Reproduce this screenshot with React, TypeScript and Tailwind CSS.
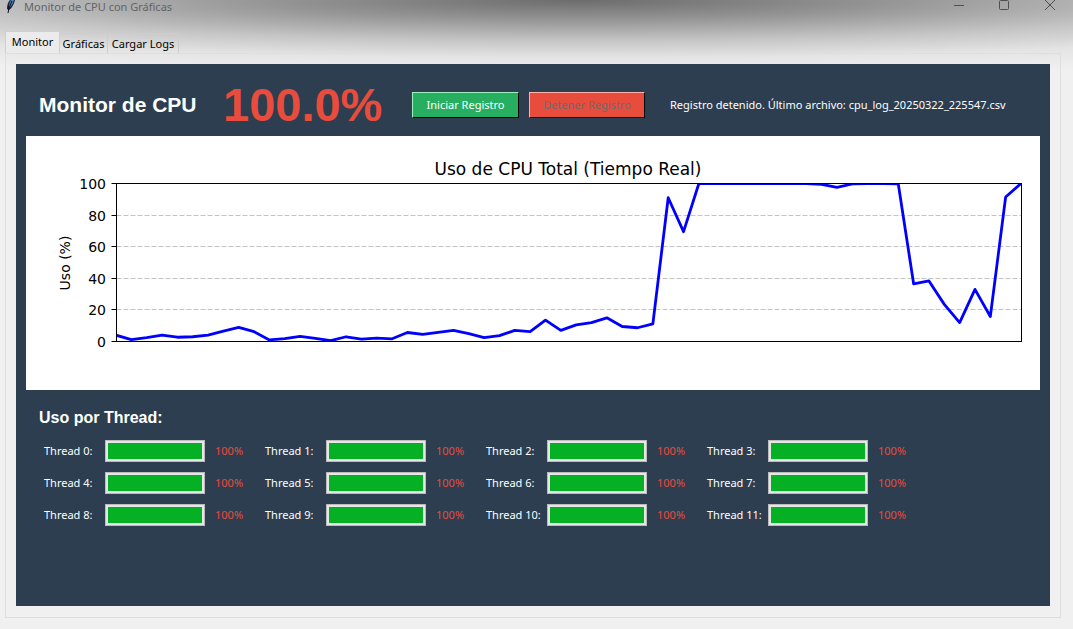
const usage = [
  4, 1.2, 2.4, 4, 2.7, 3, 4, 6.5, 9, 6.2, 1, 1.8, 3.3, 2, 0.5, 3, 1.5, 2.2, 1.7, 5.7,
  4.5, 5.8, 7, 5, 2.5, 3.7, 7, 6.2, 13.5, 7, 10.5, 12, 15, 9.5, 8.7, 11.2, 91, 69.5, 100, 100,
  100, 100, 100, 100, 100, 100, 99.5, 97.5, 99.7, 100, 100, 99.7, 36.5, 38.3, 23.5, 12, 33, 15.8, 91.5, 100,
];

const plot = { left: 90.5, right: 995.5, top: 47.5, bottom: 205.5 };
const xAt = (i: number) => plot.left - 0.5 + (i * (plot.right - plot.left)) / (usage.length - 1);
const yAt = (v: number) => plot.bottom - (v * (plot.bottom - plot.top)) / 100;
const tickY = (v: number) => Math.floor(yAt(v)) + 0.5;
const ticks = [0, 20, 40, 60, 80, 100];

function Chart() {
  return (
    <svg viewBox="0 0 1014 254" className="block h-auto w-full bg-white font-['DejaVu_Sans',sans-serif]" role="img" aria-label="Uso de CPU Total (Tiempo Real)">
      <defs>
        <clipPath id="plot-area">
          <rect x={plot.left} y={plot.top} width={plot.right - plot.left} height={plot.bottom - plot.top} />
        </clipPath>
      </defs>
      <text x="542" y="39" textAnchor="middle" className="text-[17px]">Uso de CPU Total (Tiempo Real)</text>
      <text x="44" y="127" textAnchor="middle" transform="rotate(-90 44 127)" className="text-[14px]">Uso (%)</text>
      {ticks.map((t) => (
        <g key={t}>
          {t > 0 && t < 100 && (
            <line x1={plot.left} x2={plot.right} y1={tickY(t)} y2={tickY(t)} stroke="#c4c4c4" strokeDasharray="5 2" />
          )}
          <line x1={plot.left - 5} x2={plot.left} y1={tickY(t)} y2={tickY(t)} stroke="black" />
          <text x="80" y={Math.round(tickY(t) + 5)} textAnchor="end" className="text-[14px]">{t}</text>
        </g>
      ))}
      <polyline
        clipPath="url(#plot-area)"
        points={usage.map((v, i) => `${xAt(i)},${yAt(v)}`).join(" ")}
        fill="none"
        stroke="#0000ff"
        strokeWidth="2.8"
        strokeLinejoin="round"
      />
      <rect x={plot.left} y={plot.top} width={plot.right - plot.left} height={plot.bottom - plot.top} fill="none" stroke="black" />
    </svg>
  );
}

function Feather() {
  return (
    <svg width="12" height="14" viewBox="0 0 12 14" aria-hidden="true">
      <path d="M11 0H6C4 2 3 5 3 9L5 10C8 8 10 4 11 0Z" fill="#14202e" />
      <path d="M10 0H7C5 3 5 5 5 8C8 6 9 3 10 0Z" fill="#4f82bd" />
      <path d="M8 1L5 8L4 13" fill="none" stroke="#0b0f14" />
    </svg>
  );
}

function TitleBar() {
  return (
    <header className="flex h-8 items-start pl-1 text-[#646464]">
      <Feather />
      <h1 className="grow pl-2 text-[11px] leading-[14px]">Monitor de CPU con Gráficas</h1>
      <div className="flex text-[#505050]">
        <button aria-label="Minimizar" className="flex w-[45px] justify-center">
          <svg width="12" height="12" stroke="currentColor" aria-hidden="true"><path d="M0 5.5h10" /></svg>
        </button>
        <button aria-label="Maximizar" className="flex w-[45px] justify-center">
          <svg width="12" height="12" fill="none" stroke="currentColor" aria-hidden="true"><rect x="0.5" y="0.5" width="9" height="9" rx="1" /></svg>
        </button>
        <button aria-label="Cerrar" className="flex w-[46px] justify-center">
          <svg width="12" height="12" stroke="currentColor" aria-hidden="true"><path d="M1 0L11 10M11 0L1 10" /></svg>
        </button>
      </div>
    </header>
  );
}

function Thread({ index }: { index: number }) {
  return (
    <div className="flex h-[22px] w-[221px] items-center">
      <span className="w-[61px] whitespace-nowrap">Thread {index}:</span>
      <div role="progressbar" aria-label={`Thread ${index}`} aria-valuenow={100} className="h-[22px] w-[100px] border border-[#bcbcbc] bg-[#e6e6e6] p-[2px]">
        <div className="h-full bg-[#06b025]" style={{ width: "100%" }} />
      </div>
      <span className="pl-[10px] text-[#e74c3c]">100%</span>
    </div>
  );
}

export default function App() {
  return (
    <div className="flex min-h-screen flex-col bg-[#f0f0f0] font-['Noto_Sans',sans-serif] text-[11px] text-black">
      <div className="flex grow flex-col bg-[radial-gradient(ellipse_110%_76px_at_54%_0px,#6c6c6c_0%,#939393_25%,#c6c6c6_54%,#e4e4e4_76%,#f0f0f0_100%)]">
        <TitleBar />
        <div className="flex grow flex-col pr-3 pb-[11px] pl-[5px]">
          <div role="tablist" className="flex h-[21px] items-end">
            <button role="tab" aria-selected="true" className="h-[22px] w-[55px] border border-b-0 border-[#cfcfcf] bg-[#ebebeb]">Monitor</button>
            <button role="tab" className="h-5 w-12 border-t border-r border-[#cdcdcd] pt-[2px]">Gráficas</button>
            <button role="tab" className="h-5 w-[71px] border-t border-r border-[#cdcdcd] pt-[2px]">Cargar Logs</button>
          </div>
          <div className="flex grow flex-col border border-[#dedede] p-[10px] pb-[11px]">
            <main className="grow bg-[#2c3e50] px-[10px] text-white">
              <div className="flex h-[72px] items-center pt-[10px] pl-[13px]">
                <h2 className="w-[184px] font-['Liberation_Sans',Arial,sans-serif] text-[21px] font-bold">Monitor de CPU</h2>
                <strong className="w-[189px] font-['Liberation_Sans',Arial,sans-serif] text-[47px] leading-[48px] font-bold text-[#e74c3c]">100.0%</strong>
                <button className="h-[26px] w-[107px] border border-t-[#9cf0bd] border-r-black border-b-black border-l-[#9cf0bd] bg-[#27ae60]">Iniciar Registro</button>
                <button disabled className="ml-[10px] h-[26px] w-[116px] border border-t-[#ffb3aa] border-r-black border-b-black border-l-[#ffb3aa] bg-[#e74c3c] text-[#6d6d6d]">Detener Registro</button>
                <p className="pl-[25px] whitespace-nowrap">Registro detenido. Último archivo: cpu_log_20250322_225547.csv</p>
              </div>
              <Chart />
              <section className="pt-4 pl-[13px]">
                <h3 className="font-['Liberation_Sans',Arial,sans-serif] text-[16px] leading-[24px] font-bold">Uso por Thread:</h3>
                <div className="flex max-w-[900px] flex-wrap gap-y-[10px] pt-[10px] pl-[5px]">
                  {Array.from({ length: 12 }, (_, i) => <Thread key={i} index={i} />)}
                </div>
              </section>
            </main>
          </div>
        </div>
      </div>
    </div>
  );
}
